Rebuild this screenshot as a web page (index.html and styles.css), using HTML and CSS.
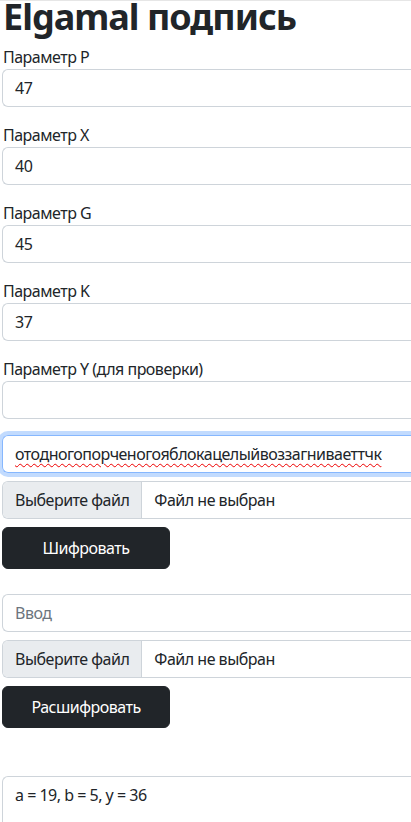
FILE: index.html
```html
<!DOCTYPE html>
<html lang="ru">
<head>
<meta charset="utf-8">
<title>Elgamal подпись</title>
<link rel="stylesheet" href="styles.css">
</head>
<body>
<div class="page">
  <h1 class="title">Elgamal подпись</h1>
  <div class="group">
    <label class="label">Параметр P</label>
    <div class="control">47</div>
  </div>
  <div class="group">
    <label class="label">Параметр X</label>
    <div class="control">40</div>
  </div>
  <div class="group">
    <label class="label">Параметр G</label>
    <div class="control">45</div>
  </div>
  <div class="group">
    <label class="label">Параметр K</label>
    <div class="control">37</div>
  </div>
  <div class="group">
    <label class="label">Параметр Y (для проверки)</label>
    <div class="control"></div>
  </div>
  <div class="control focused"><span class="misspelled">отодногопорченогояблокацелыйвоззагниваеттчк</span></div>
  <div class="file">
    <span class="file-btn">Выберите файл</span>
    <span class="file-name">Файл не выбран</span>
  </div>
  <button class="btn">Шифровать</button>
  <div class="control placeholder second">Ввод</div>
  <div class="file">
    <span class="file-btn">Выберите файл</span>
    <span class="file-name">Файл не выбран</span>
  </div>
  <button class="btn">Расшифровать</button>
  <div class="control output">a = 19, b = 5, y = 36</div>
</div>
</body>
</html>
```
FILE: styles.css
```css
html, body {
  margin: 0;
  padding: 0;
  background: #fff;
}
body {
  border-top: 1px solid #e6e6e6;
  font-family: "Noto Sans", "Open Sans", sans-serif;
  font-size: 16px;
  line-height: 24px;
  letter-spacing: -0.5px;
  color: #212529;
  overflow: hidden;
}
.page {
  padding: 0 0 0 2px;
  height: 821px;
}
.title {
  margin: 0 0 12px 0;
  height: 32px;
  font-size: 36px;
  line-height: 32px;
  letter-spacing: -1px;
  font-weight: 700;
  padding-left: 1px;
}
.group {
  margin-bottom: 16px;
}
.label {
  display: block;
  height: 24px;
  padding-left: 1px;
}
.control {
  box-sizing: border-box;
  height: 38px;
  width: 100%;
  padding: 6px 12px;
  border: 1px solid #ced4da;
  border-right: none;
  border-radius: 6px 0 0 6px;
  white-space: nowrap;
  overflow: hidden;
}
.focused {
  border-color: #86b7fe;
  box-shadow: 0 0 0 4px rgba(13, 110, 253, 0.25);
}
.misspelled {
  text-decoration: underline wavy #e00;
  text-decoration-thickness: 1px;
  text-underline-offset: 3px;
}
.file {
  box-sizing: border-box;
  display: flex;
  width: 100%;
  height: 38px;
  margin-top: 8px;
  border: 1px solid #ced4da;
  border-right: none;
  border-radius: 6px 0 0 6px;
  overflow: hidden;
}
.file-btn {
  background: #e9ecef;
  padding: 6px 12px;
  border-right: 1px solid #ced4da;
}
.file-name {
  padding: 6px 12px;
}
.btn {
  display: block;
  box-sizing: border-box;
  margin-top: 8px;
  width: 168px;
  height: 42px;
  background: #212529;
  color: #fff;
  border: 1px solid #212529;
  border-radius: 6px;
  font-family: inherit;
  font-size: 16px;
  letter-spacing: -0.5px;
  line-height: 24px;
  padding: 8px 0;
}
.second {
  margin-top: 25px;
}
.placeholder {
  color: #6c757d;
}
.output {
  margin-top: 48px;
  height: 80px;
}
```
